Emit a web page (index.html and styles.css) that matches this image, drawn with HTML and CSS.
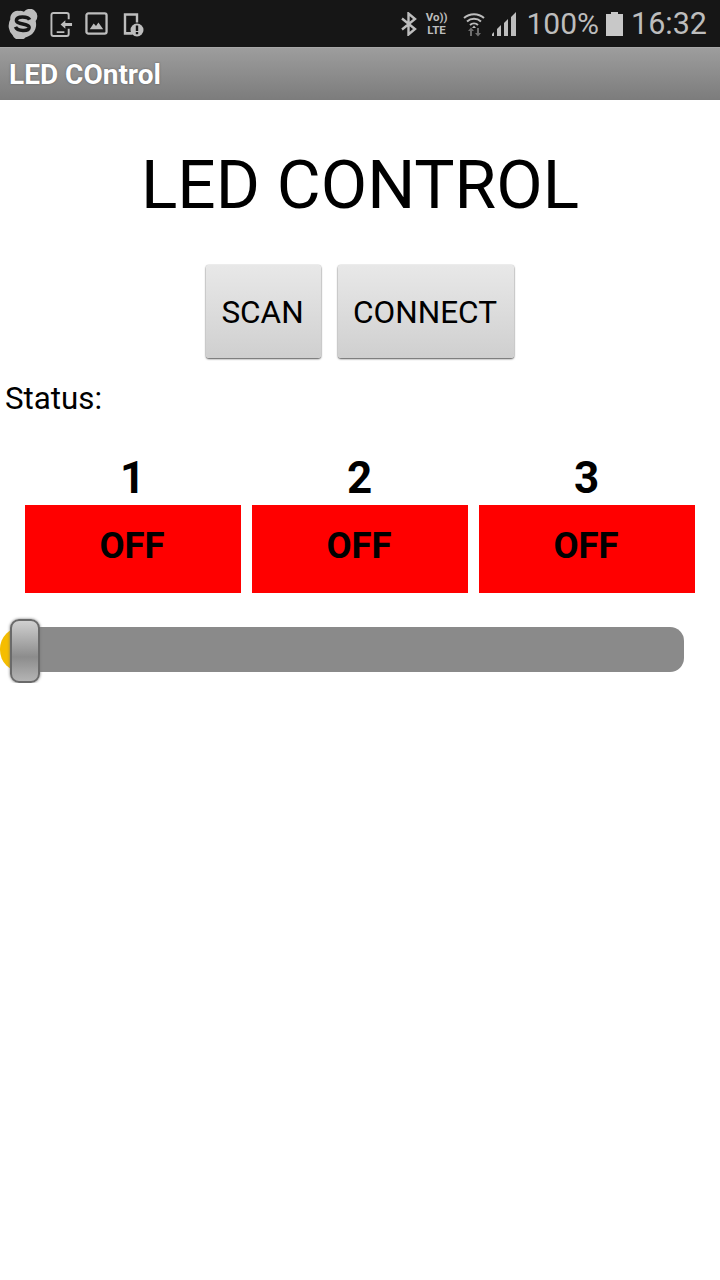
FILE: index.html
```html
<!DOCTYPE html>
<html lang="en">
<head>
    <meta charset="UTF-8">
    <title>LED COntrol</title>
    <link rel="stylesheet" href="styles.css">
</head>
<body>
    <div class="status-bar">
        <div class="status-left">
            <svg class="icon" width="30" height="30" viewBox="0 0 32 32">
                <path d="M12 2a12 12 0 0 1 5 .8 8 8 0 0 1 12.500 10 14 14 0 0 1-11 17.500A8 8 0 0 1 5 28 14 14 0 0 1 2.500 11 8 8 0 0 1 12 2z" fill="#bdbdbd"/>
                <path d="M23 11.500c-1.500-3.500-13.500-4.500-14 .5-.4 5 14 3 13.500 8-.5 4-12.500 4-14.500-1" fill="none" stroke="#161616" stroke-width="3.800"/>
            </svg>
            <svg class="icon" width="23" height="26" viewBox="0 0 24 26">
                <path d="M12 1.500H3.500a2 2 0 0 0-2 2v20a2 2 0 0 0 2 2h14a2 2 0 0 0 2-2V18M12 1.500h5.500a2 2 0 0 1 2 2V8" fill="none" stroke="#bdbdbd" stroke-width="2"/>
                <path d="M7 20.500h8v2H7zM11 13.500l5-4.500v3h7v3h-7v3z" fill="#bdbdbd"/>
            </svg>
            <svg class="icon" width="23" height="23" viewBox="0 0 24 24">
                <rect x="1.500" y="1.500" width="21" height="21" rx="2" fill="none" stroke="#bdbdbd" stroke-width="2.400"/>
                <path d="M5 18l4-6 2.500 2.500L14 11l5 7z" fill="#bdbdbd"/>
            </svg>
            <svg class="icon" width="24" height="26" viewBox="0 0 24 26">
                <path d="M12 22.500H5v-19h12v8" fill="none" stroke="#bdbdbd" stroke-width="2.400"/>
                <path d="M6 21h6v2H6z" fill="#bdbdbd"/>
                <circle cx="17" cy="19" r="6.500" fill="#bdbdbd"/>
                <path d="M15.800 14.500h2.400v5.500h-2.400zM15.800 21h2.400v2.200h-2.400z" fill="#161616"/>
            </svg>
        </div>
        <div class="status-right">
            <svg class="icon" width="17" height="24" viewBox="0 0 17 24">
                <path d="M2 6.500l13 10.500-6.500 5.500V1.500L15 7 2 17.500" fill="none" stroke="#bdbdbd" stroke-width="2.400"/>
            </svg>
            <div class="volte"><span>Vo))</span><span>LTE</span></div>
            <svg class="icon wifi" width="22" height="26" viewBox="0 0 22 26">
                <path d="M1 7a15 15 0 0 1 20 0M4 10.500a10.500 10.500 0 0 1 14 0M7 14a6 6 0 0 1 8 0" fill="none" stroke="#bdbdbd" stroke-width="2"/>
                <path d="M11 14.500l2 2.500H9z" fill="#bdbdbd"/>
                <path d="M7 25v-5H5l3-3.500 3 3.500H9v5zM14 17v5h-2l3 3.500 3-3.500h-2v-5z" fill="#6e6e6e"/>
            </svg>
            <svg class="icon signal" width="25" height="24" viewBox="0 0 25 24">
                <path d="M0 24v-2l2-2v4zM5 24v-7l4-4v11zM12 24V11l4-4v17zM19 24V5l5-5v24z" fill="#bdbdbd"/>
            </svg>
            <span class="percent">100%</span>
            <svg class="icon battery" width="17" height="24" viewBox="0 0 17 24">
                <path d="M5 0h7v2h5v22H0V2h5z" fill="#c8c8c8"/>
            </svg>
            <span class="clock">16:32</span>
        </div>
    </div>

    <div class="title-bar">LED COntrol</div>

    <h1 class="heading">LED CONTROL</h1>

    <div class="button-row">
        <button class="gray-button scan">SCAN</button>
        <button class="gray-button connect">CONNECT</button>
    </div>

    <div class="status-label">Status:</div>

    <div class="led-row">
        <div class="led">
            <div class="led-number">1</div>
            <div class="led-button">OFF</div>
        </div>
        <div class="led">
            <div class="led-number">2</div>
            <div class="led-button">OFF</div>
        </div>
        <div class="led">
            <div class="led-number">3</div>
            <div class="led-button">OFF</div>
        </div>
    </div>

    <div class="slider">
        <div class="slider-fill"></div>
        <div class="slider-track"></div>
        <div class="slider-thumb"></div>
    </div>
</body>
</html>
```

FILE: styles.css
```css
body {
    margin: 0;
    font-family: Roboto, "Liberation Sans", sans-serif;
    background-color: white;
    color: black;
}

.status-bar {
    height: 47px;
    background-color: #161616;
    display: flex;
    justify-content: space-between;
    align-items: center;
    color: #bdbdbd;
}

.status-left {
    display: flex;
    align-items: center;
    gap: 12px;
    padding-left: 8px;
}

.status-right {
    display: flex;
    align-items: center;
    padding-right: 13px;
}

.icon {
    display: block;
}

.volte {
    display: flex;
    flex-direction: column;
    gap: 1px;
    align-items: center;
    margin-left: 9px;
    font-size: 11.500px;
    font-weight: 700;
    line-height: 12px;
}

.wifi {
    margin-left: 16px;
}

.signal {
    margin-left: 7px;
}

.percent {
    margin-left: 9px;
    font-size: 30px;
}

.battery {
    margin-left: 7px;
}

.clock {
    margin-left: 8px;
    font-size: 30.500px;
}

.title-bar {
    height: 53px;
    padding-left: 9px;
    box-sizing: border-box;
    background: linear-gradient(#9d9d9d, #7c7c7c);
    border-top: 1px solid #a8a8a8;
    color: white;
    font-size: 28px;
    font-weight: 700;
    line-height: 53px;
    text-shadow: 0 0 2px #555;
}

.heading {
    margin: 47px 0 0;
    font-size: 67.500px;
    font-weight: 400;
    line-height: 76px;
    text-align: center;
}

.button-row {
    display: flex;
    justify-content: center;
    gap: 17px;
    margin-top: 42px;
}

.gray-button {
    height: 93px;
    padding: 2px 2px 0 0;
    border: none;
    border-radius: 3px;
    background: linear-gradient(#e8e8e8, #dcdcdc 50%, #cfcfcf);
    box-shadow: 0 1px 2px #555, 0 0 1px #999;
    font-family: inherit;
    font-size: 31.500px;
    color: black;
}

.scan {
    width: 115px;
}

.connect {
    width: 176px;
}

.status-label {
    margin: 23px 0 0 5px;
    font-size: 31.300px;
    line-height: 36px;
}

.led-row {
    display: flex;
    justify-content: center;
    gap: 11px;
    margin-top: 35px;
}

.led {
    width: 216px;
}

.led-number {
    padding-right: 1px;
    font-size: 44px;
    font-weight: 700;
    line-height: 53px;
    text-align: center;
}

.led-button {
    height: 88px;
    padding-right: 2px;
    background-color: red;
    font-size: 36.500px;
    font-weight: 700;
    line-height: 82px;
    text-align: center;
}

.slider {
    position: relative;
    height: 64px;
    margin-top: 26px;
    padding-top: 8px;
    box-sizing: border-box;
    display: flex;
    align-items: flex-start;
}

.slider-fill {
    width: 24px;
    height: 45px;
    background-color: #f5bd00;
    border-radius: 22px 0 0 22px;
}

.slider-track {
    width: 660px;
    height: 45px;
    background-color: #8a8a8a;
    border-radius: 0 14px 14px 0;
}

.slider-thumb {
    position: absolute;
    left: 10px;
    top: 0;
    width: 26px;
    height: 60px;
    border: 2px solid #6a6a6a;
    border-radius: 9px;
    background: linear-gradient(#d0d0d0, #8c8c8c 60%, #b4b4b4);
    box-shadow: 0 0 3px #777;
}
```
